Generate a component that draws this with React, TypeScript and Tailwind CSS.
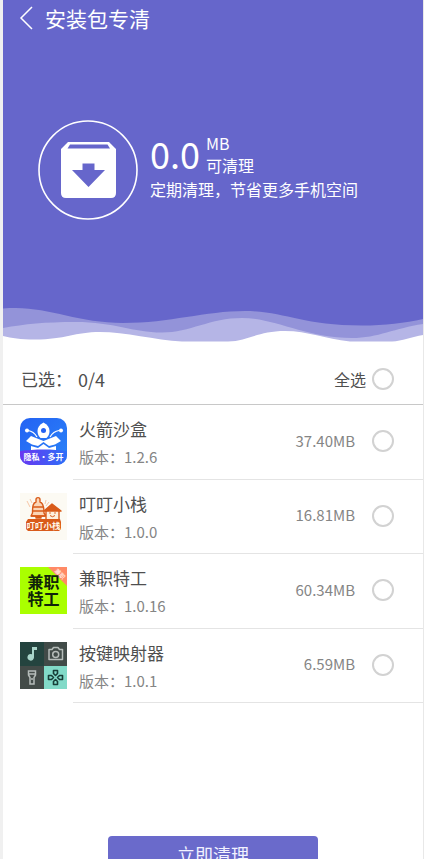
import { useState } from "react";
import type { ReactNode } from "react";

type Pkg = { id: string; name: string; version: string; size: string; icon: ReactNode };

function RocketIcon() {
  return (
    <svg viewBox="0 0 47 47" className="size-[47px] shrink-0" aria-hidden="true">
      <defs>
        <linearGradient id="rocket-bg" x1="0" y1="0" x2="1" y2="1">
          <stop offset="0" stopColor="#2462f3" />
          <stop offset="1" stopColor="#2a84f8" />
        </linearGradient>
        <linearGradient id="rocket-band" x1="0" y1="0" x2="1" y2="0">
          <stop offset="0" stopColor="#6a35f0" />
          <stop offset="1" stopColor="#2c6ff8" />
        </linearGradient>
        <clipPath id="rocket-clip">
          <rect width="47" height="47" rx="10" />
        </clipPath>
      </defs>
      <g clipPath="url(#rocket-clip)">
        <rect width="47" height="47" fill="url(#rocket-bg)" />
        <path d="M23.500 4.500C19.500 6.500 17.500 9.500 17.500 13C17.500 16 18.500 18 20.500 20H26.500C28.500 18 29.500 16 29.500 13C29.500 9.500 27.500 6.500 23.500 4.500Z" fill="#fff" />
        <circle cx="23.500" cy="12.500" r="2.500" fill="#2462f3" />
        <path d="M8 12.500C12 13 15 15.500 17 19M39 12.500C35 13 32 15.500 30 19" fill="none" stroke="#fff" strokeWidth="1.200" />
        <circle cx="7" cy="12.500" r="2" fill="#fff" />
        <circle cx="41" cy="12.500" r="2" fill="#fff" />
        <path d="M11 18L23.500 23L36 18L41 23L35 26.500L29 28L23.500 24L18 28L12 26.500L6 23Z" fill="#fff" />
        <path d="M11 28L18 30L23.500 26L29 30L36 28V34H11Z" fill="#fff" />
        <path d="M0 33C14 31 33 31 47 33V47H0Z" fill="url(#rocket-band)" />
        <text x="23.500" y="42" textAnchor="middle" fontSize="8" fontWeight="700" fill="#fff">隐私·多开</text>
      </g>
    </svg>
  );
}

function BellIcon() {
  return (
    <svg viewBox="0 0 47 47" className="size-[47px] shrink-0" aria-hidden="true">
      <rect width="47" height="47" fill="#fcfaf3" />
      <path d="M7 8L10 14M10 6L12 10M26 7L25 11M29 9L26 13" stroke="#f7c6a6" strokeWidth="1" />
      <g stroke="#d95b1a" strokeWidth="1.400" strokeLinejoin="round">
        <path d="M16 6.500C16 4 20 4 20 6.500V9C23 10 24 13 24 20L26 23H11L12.500 20C12.500 13 13 10 16 9Z" fill="#fbd5b6" />
        <path d="M13 14H23M12 18H24M11 23H25" fill="none" />
        <path d="M16 23V25H21V23" fill="#d95b1a" />
        <path d="M26 17H39V27H26Z" fill="#fdf0df" />
        <path d="M24 18L32 11L41 18Z" fill="#d95b1a" />
      </g>
      <circle cx="30" cy="20" r="0.800" fill="#d95b1a" />
      <circle cx="35" cy="20" r="0.800" fill="#d95b1a" />
      <path d="M30 22.500Q32.500 25 35 22.500" fill="none" stroke="#d95b1a" strokeWidth="1" />
      <path d="M8 26H40L41 29V36L39 38H8L6 36V29Z" fill="#d95b1a" />
      <text x="23.500" y="36" textAnchor="middle" fontSize="8.500" fontWeight="700" fill="#fff8ea">叮叮小栈</text>
    </svg>
  );
}

function JobIcon() {
  return (
    <svg viewBox="0 0 47 47" className="size-[47px] shrink-0" aria-hidden="true">
      <rect width="47" height="47" fill="#aaff00" />
      <path d="M28 0H47V19Z" fill="#ff8a66" />
      <text x="40" y="9" textAnchor="middle" fontSize="6" fontWeight="700" fill="#ffe3d8" transform="rotate(45 40 7)">兼职</text>
      <g fontSize="16" fontWeight="700" fill="#10240a" textAnchor="middle">
        <text x="23.500" y="21">兼职</text>
        <text x="23.500" y="38">特工</text>
      </g>
    </svg>
  );
}

function KeyMapIcon() {
  return (
    <svg viewBox="0 0 47 47" className="size-[47px] shrink-0" aria-hidden="true">
      <rect width="24" height="24" fill="#24443f" />
      <rect x="24" width="23" height="24" fill="#414b48" />
      <rect y="24" width="24" height="23" fill="#434b48" />
      <rect x="24" y="24" width="23" height="23" fill="#82dac8" />
      <path d="M12 5H17V8H14V15.500A3.300 3.300 0 1 1 12 12.300Z" fill="#a9d5ca" />
      <g fill="none" stroke="#b5bcb9" strokeWidth="1.500">
        <path d="M29 7.500H32L33.500 5.500H38L39.500 7.500H42.500V17.500H29Z" strokeLinejoin="round" />
        <circle cx="35.700" cy="12.500" r="3" />
        <path d="M8.500 29H15.500V33L14 35.500V42H10V35.500L8.500 33ZM8.500 32H15.500" />
        <path d="M12 36V38" />
      </g>
      <g fill="none" stroke="#173f38" strokeWidth="1.600" strokeLinejoin="round">
        <path d="M33.500 28.500H37.500V31.500L35.500 33.500L33.500 31.500Z" />
        <path d="M33.500 42.500H37.500V39.500L35.500 37.500L33.500 39.500Z" />
        <path d="M28.500 33.500V37.500H31.500L33.500 35.500L31.500 33.500Z" />
        <path d="M42.500 33.500V37.500H39.500L37.500 35.500L39.500 33.500Z" />
      </g>
    </svg>
  );
}

const packages: Pkg[] = [
  { id: "rocket", name: "火箭沙盒", version: "1.2.6", size: "37.40MB", icon: <RocketIcon /> },
  { id: "bell", name: "叮叮小栈", version: "1.0.0", size: "16.81MB", icon: <BellIcon /> },
  { id: "job", name: "兼职特工", version: "1.0.16", size: "60.34MB", icon: <JobIcon /> },
  { id: "keymap", name: "按键映射器", version: "1.0.1", size: "6.59MB", icon: <KeyMapIcon /> },
];

const tick =
  "size-[22px] shrink-0 appearance-none rounded-full border-2 border-[#d2d2d2] bg-white checked:border-[#6666cb] checked:bg-[#6666cb]";

function Waves() {
  return (
    <svg viewBox="3 300 420 42" preserveAspectRatio="none" className="block h-[42px] w-full" aria-hidden="true">
      <path
        d="M3 300H423V335C412 337 402 341 392 341.500H350C325 339 308 331 285 331C258 331 248 341 228 341.500H182C155 340 125 332 100 332C75 332 65 339.500 35 339.500C20 339.500 12 338 3 336Z"
        fill="#b5b5e6"
      />
      <path
        d="M3 300H423V324C395 328 378 338 352 338C305 338 275 318 242 318C210 318 190 332.500 162 332.500C132 332.500 115 322 75 322C45 322 25 324 3 328Z"
        fill="#9393d9"
      />
      <path
        d="M3 300H423V319C405 323 385 325.500 362 325.500C300 325.500 285 311 245 311C205 311 170 323 123 323C80 323 50 308 16 308C11 308 7 308 3 308.500Z"
        fill="#6666cb"
      />
    </svg>
  );
}

export default function App() {
  const [selected, setSelected] = useState<string[]>([]);
  const toggle = (id: string) =>
    setSelected((s) => (s.includes(id) ? s.filter((x) => x !== id) : [...s, id]));
  const all = selected.length === packages.length;

  return (
    <div className="h-screen overflow-hidden border-r border-l-3 border-r-[#e8e8e8] border-l-[#f0f0f0] bg-white font-['Noto_Sans_CJK_SC',sans-serif] text-[#4f4f4f]">
      <header>
        <div className="h-[300px] bg-[#6666cb] text-white">
          <div className="flex h-9 items-center gap-3 pl-4">
            <button type="button" aria-label="返回" className="flex">
              <svg viewBox="0 0 14 24" className="h-6 w-[14px]" fill="none" stroke="currentColor" strokeWidth="1.500">
                <path d="M13 1L2 12L13 23" />
              </svg>
            </button>
            <h1 className="text-[21px] leading-9">安装包专清</h1>
          </div>
          <div className="flex items-center gap-3 pt-[84px] pl-[35px]">
            <svg viewBox="0 0 100 100" className="size-[100px] shrink-0" aria-hidden="true">
              <circle cx="50" cy="50" r="49" fill="none" stroke="#fff" strokeWidth="1.600" />
              <path
                fillRule="evenodd"
                fill="#fff"
                d="M30 22H71L78 29V73Q78 78 73 78H28Q23 78 23 73V29ZM32 24.500L29.500 28.500H72L69.500 24.500ZM44.500 43.500V50H34L50.500 67L67 50H56.500V43.500Z"
              />
            </svg>
            <div className="pb-[6px]">
              <div className="flex items-start gap-[6px]">
                <span className="text-4xl leading-[42px]">0.0</span>
                <span className="flex flex-col text-base leading-[22px]">
                  <span>MB</span>
                  <span>可清理</span>
                </span>
              </div>
              <p className="text-base leading-[26px]">定期清理，节省更多手机空间</p>
            </div>
          </div>
        </div>
        <Waves />
      </header>

      <main>
        <div className="flex h-[63px] items-center justify-between border-b border-[#c8c8c8] pt-3 pr-[29px] pl-[18px]">
          <p className="flex items-center gap-[6px] text-lg leading-6">
            <span className="text-[17px]">已选：</span>
            <span>{selected.length}/{packages.length}</span>
          </p>
          <label className="flex items-center gap-[6px] text-base leading-6">
            全选
            <input
              type="checkbox"
              className={tick}
              checked={all}
              onChange={() => setSelected(all ? [] : packages.map((p) => p.id))}
            />
          </label>
        </div>

        <ul className="flex h-[298px] flex-col">
          {packages.map((p) => (
            <li key={p.id} className="flex-1">
              <label className="flex h-full gap-[6px] pl-[17px]">
                <span className="flex items-start pt-[13px]">{p.icon}</span>
                <span className="flex grow items-start border-b border-[#e4e4e4] pt-3 pr-[29px] pl-[6px]">
                  <span className="flex grow flex-col gap-1">
                    <span className="text-[17px] leading-6">{p.name}</span>
                    <span className="text-[15px] leading-6 text-[#858585]">版本：{p.version}</span>
                  </span>
                  <span className="flex h-12 items-center gap-[17px] text-[15px] text-[#858585]">
                    {p.size}
                    <input
                      type="checkbox"
                      className={tick}
                      checked={selected.includes(p.id)}
                      onChange={() => toggle(p.id)}
                    />
                  </span>
                </span>
              </label>
            </li>
          ))}
        </ul>

        <div className="flex justify-center pt-[133px] pb-8">
          <button type="button" className="h-9 w-1/2 rounded bg-[#6a6acb] text-lg leading-9 text-[#f2f2ff]">
            立即清理
          </button>
        </div>
      </main>
    </div>
  );
}
